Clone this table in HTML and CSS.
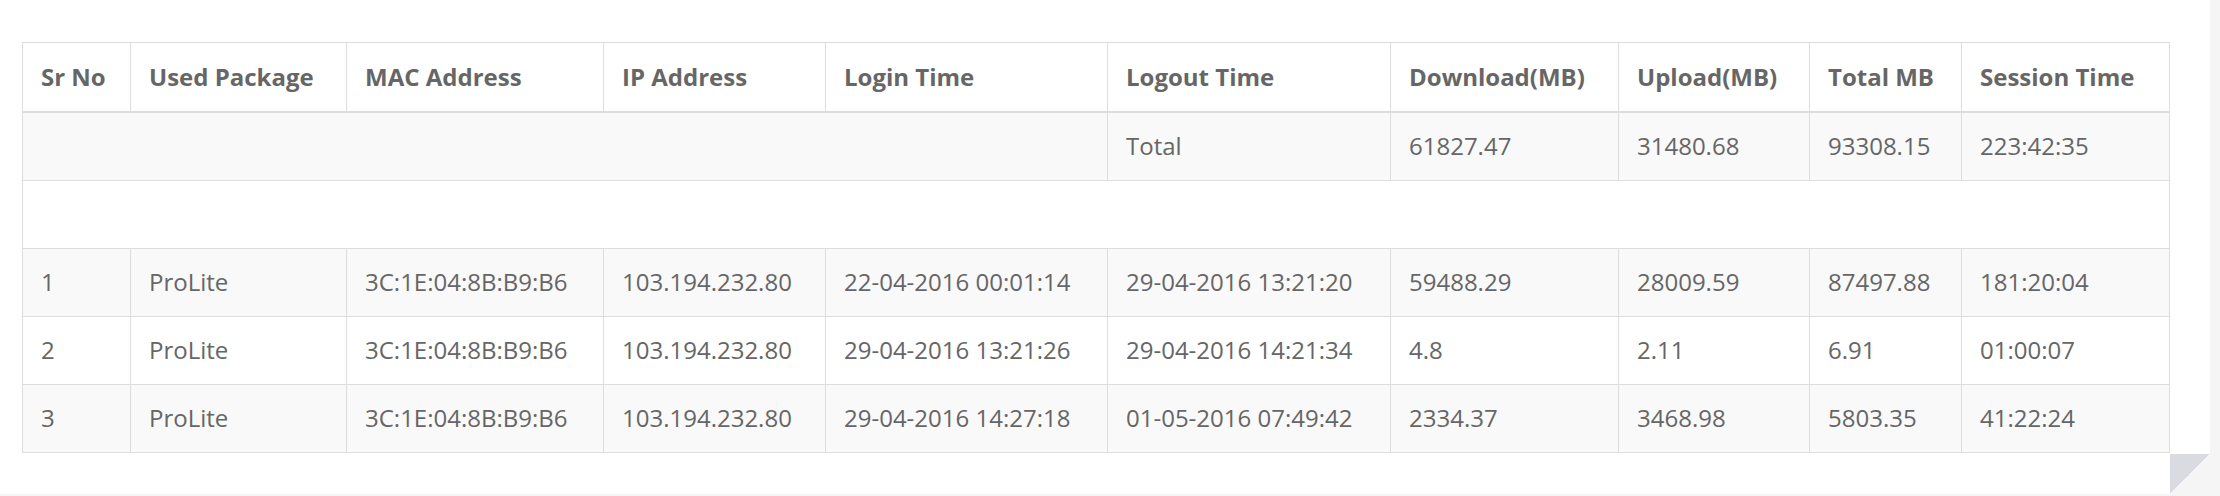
FILE: index.html
```html
<!DOCTYPE html>
<html>
<head>
<meta charset="utf-8">
<link rel="stylesheet" href="styles.css">
</head>
<body>
<div class="panel">
  <table class="report">
    <colgroup>
      <col class="c1"><col class="c2"><col class="c3"><col class="c4"><col class="c5">
      <col class="c6"><col class="c7"><col class="c8"><col class="c9"><col class="c10">
    </colgroup>
    <thead>
      <tr>
        <th>Sr No</th>
        <th>Used Package</th>
        <th>MAC Address</th>
        <th>IP Address</th>
        <th>Login Time</th>
        <th>Logout Time</th>
        <th>Download(MB)</th>
        <th>Upload(MB)</th>
        <th>Total MB</th>
        <th>Session Time</th>
      </tr>
    </thead>
    <tbody>
      <tr>
        <td colspan="5"></td>
        <td>Total</td>
        <td>61827.47</td>
        <td>31480.68</td>
        <td>93308.15</td>
        <td>223:42:35</td>
      </tr>
      <tr>
        <td colspan="10" class="blank"></td>
      </tr>
      <tr>
        <td>1</td>
        <td>ProLite</td>
        <td>3C:1E:04:8B:B9:B6</td>
        <td>103.194.232.80</td>
        <td>22-04-2016 00:01:14</td>
        <td>29-04-2016 13:21:20</td>
        <td>59488.29</td>
        <td>28009.59</td>
        <td>87497.88</td>
        <td>181:20:04</td>
      </tr>
      <tr>
        <td>2</td>
        <td>ProLite</td>
        <td>3C:1E:04:8B:B9:B6</td>
        <td>103.194.232.80</td>
        <td>29-04-2016 13:21:26</td>
        <td>29-04-2016 14:21:34</td>
        <td>4.8</td>
        <td>2.11</td>
        <td>6.91</td>
        <td>01:00:07</td>
      </tr>
      <tr>
        <td>3</td>
        <td>ProLite</td>
        <td>3C:1E:04:8B:B9:B6</td>
        <td>103.194.232.80</td>
        <td>29-04-2016 14:27:18</td>
        <td>01-05-2016 07:49:42</td>
        <td>2334.37</td>
        <td>3468.98</td>
        <td>5803.35</td>
        <td>41:22:24</td>
      </tr>
    </tbody>
  </table>
  <div class="fold"></div>
</div>
</body>
</html>
```

FILE: styles.css
```css
html, body {
  margin: 0;
  padding: 0;
}
body {
  background: #f5f5f5;
  font-family: "Open Sans", "Liberation Sans", sans-serif;
  color: #666;
}
.panel {
  position: relative;
  width: 2210px;
  height: 494px;
  box-sizing: border-box;
  background: #fff;
  padding: 42px 0 0 22px;
}
.report {
  border-collapse: collapse;
  table-layout: fixed;
  width: 2148px;
  border: 1px solid #ddd;
  font-size: 24px;
  line-height: 34px;
}
.c1 { width: 108px; }
.c2 { width: 216px; }
.c3 { width: 257px; }
.c4 { width: 222px; }
.c5 { width: 282px; }
.c6 { width: 283px; }
.c7 { width: 228px; }
.c8 { width: 191px; }
.c9 { width: 152px; }
.c10 { width: 208px; }
.report th,
.report td {
  border: 1px solid #ddd;
  text-align: left;
  vertical-align: middle;
  padding: 16px 18px 17px;
  white-space: nowrap;
}
.report th {
  font-weight: 700;
  color: #666;
  padding-top: 17px;
  padding-bottom: 17px;
  border-bottom: 2px solid #ddd;
  background: #fff;
}
.report td {
  font-weight: 400;
  color: #666;
  height: 34px;
}
.report tbody tr:nth-child(odd) {
  background: #f9f9f9;
}
.report tbody tr:nth-child(even) {
  background: #fff;
}
.fold {
  position: absolute;
  right: 0;
  bottom: 0;
  width: 40px;
  height: 40px;
  background: linear-gradient(to bottom right, #dadae1 50%, #f5f5f5 50%);
}
```
